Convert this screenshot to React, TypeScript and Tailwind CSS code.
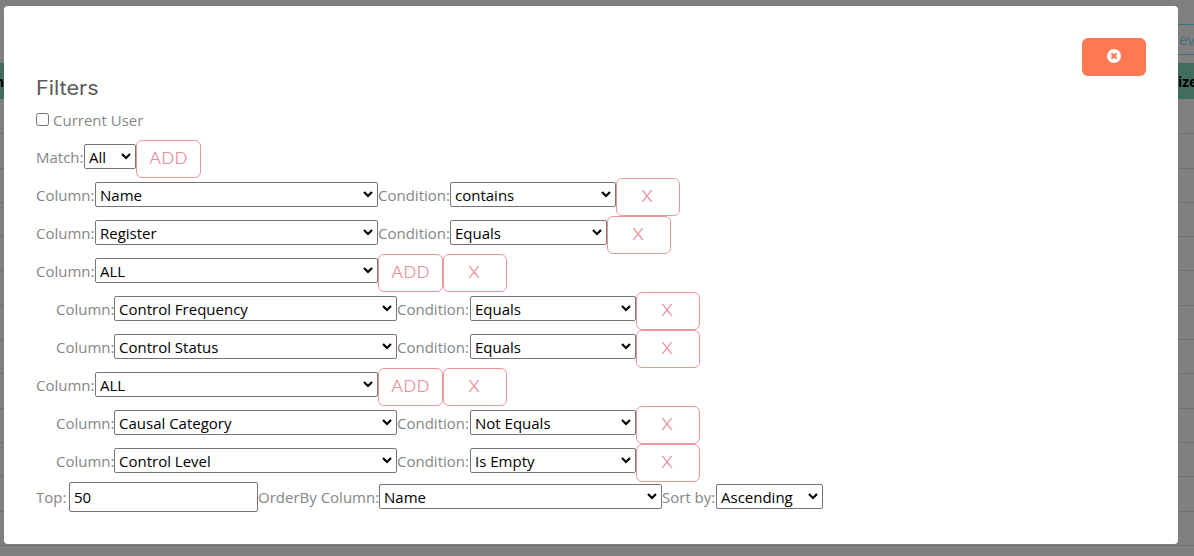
import type { ReactNode } from "react";

const gridLines = [133, 168, 202, 236, 270, 305, 339, 373, 408, 442, 476, 511, 545];

function Label({ children, className }: { children: ReactNode; className: string }) {
  return <span className={`h-[25px] shrink-0 whitespace-nowrap leading-[25px] text-[#868686] ${className}`}>{children}</span>;
}

function Select({ value, className }: { value: string; className: string }) {
  return (
    <div className={`grid h-[25px] shrink-0 ${className}`}>
      <select className="col-start-1 row-start-1 w-full appearance-none rounded-[2px] border border-[#767676] bg-white pl-1 leading-[22px] text-black">
        <option>{value}</option>
      </select>
      <svg className="pointer-events-none col-start-1 row-start-1 mr-[5px] mt-[9px] justify-self-end" width="10" height="7" viewBox="0 0 10 7" fill="none" stroke="#000" strokeWidth="2.2">
        <path d="M1 1l4 4 4-4" />
      </svg>
    </div>
  );
}

function OutlineButton({ children, className = "w-16" }: { children: ReactNode; className?: string }) {
  return (
    <button className={`h-[38px] shrink-0 rounded-[6px] border border-[#e8999f] pb-px pr-px text-center font-['Inter',sans-serif] text-[15.5px] font-light text-[#e8919a] ${className}`}>
      <span className="inline-block scale-x-[1.18]">{children}</span>
    </button>
  );
}

function Condition({ column, condition, indent = false, width = "w-[166px]" }: { column: string; condition: string; indent?: boolean; width?: string }) {
  return (
    <div className={`flex h-[38px] ${indent ? "pl-5" : ""}`}>
      <Label className={`mt-[5px] ${indent ? "w-[58px]" : "w-[59px]"}`}>Column:</Label>
      <Select value={column} className="mt-1 w-[283px]" />
      <Label className={`mt-[5px] ${indent ? "w-[73px]" : "w-[72px]"}`}>Condition:</Label>
      <Select value={condition} className={`mt-1 ${width}`} />
      <OutlineButton>X</OutlineButton>
    </div>
  );
}

function Group() {
  return (
    <div className="flex h-[38px]">
      <Label className="mt-[5px] w-[59px]">Column:</Label>
      <Select value="ALL" className="mt-1 w-[283px]" />
      <OutlineButton className="w-[65px]">ADD</OutlineButton>
      <OutlineButton>X</OutlineButton>
    </div>
  );
}

function Backdrop() {
  return (
    <div className="absolute inset-0 bg-[#808080]">
      {gridLines.map((y) => (
        <div key={y} className="absolute inset-x-0 h-px bg-[#6f6f6f]" style={{ top: y }} />
      ))}
      <div className="absolute right-0 top-6 h-[31px] w-10 border-y border-[#3f6d78] pl-[25px] text-[15px] leading-[29px] text-[#446f7a]">ev</div>
      <div className="absolute inset-x-0 top-[63px] flex h-9 items-center justify-between overflow-hidden bg-[#406d60] text-[14px] font-bold text-black">
        <span className="-ml-[5px]">n</span>
        <span className="w-4">ize</span>
      </div>
    </div>
  );
}

export default function App() {
  return (
    <div className="relative h-[556px] w-[1194px] overflow-hidden font-['Open_Sans',sans-serif] text-[15px]">
      <Backdrop />
      <main className="relative ml-1 mt-1.5 h-[538px] w-[1174px] rounded bg-white px-8 pt-8">
        <div className="flex h-[38px] justify-end">
          <button aria-label="Close" className="flex h-[38px] w-16 items-center justify-center rounded-[6px] bg-[#ff7851] pb-0.5">
            <svg width="16" height="16" viewBox="0 0 16 16">
              <circle cx="8" cy="8" r="7" fill="#fff" />
              <path d="M5.5 5.5l5 5m0-5l-5 5" stroke="#ff7851" strokeWidth="2.3" />
            </svg>
          </button>
        </div>
        <h5 className="h-6 w-fit origin-left scale-x-[1.11] font-['Inter',sans-serif] text-[19.5px] leading-6 text-[#5a5a5a]">Filters</h5>
        <div className="mt-2 flex h-[25px] items-center">
          <input type="checkbox" className="m-0 -mt-0.5 h-[13px] w-[13px]" />
          <Label className="ml-1">Current User</Label>
        </div>
        <div className="mt-[7px] flex h-[38px]">
          <Label className="mt-[5px] w-12">Match:</Label>
          <Select value="All" className="mt-1 w-[52px]" />
          <OutlineButton className="w-[65px]">ADD</OutlineButton>
        </div>
        <Condition column="Name" condition="contains" />
        <Condition column="Register" condition="Equals" width="w-[157px]" />
        <Group />
        <Condition column="Control Frequency" condition="Equals" indent />
        <Condition column="Control Status" condition="Equals" indent />
        <Group />
        <Condition column="Causal Category" condition="Not Equals" indent />
        <Condition column="Control Level" condition="Is Empty" indent />
        <div className="flex h-[30px]">
          <Label className="mt-[3px] w-[33px]">Top:</Label>
          <input defaultValue="50" className="h-[30px] w-[189px] rounded-[2px] border border-[#767676] pl-1 text-black" />
          <Label className="mt-[3px] w-[121px]">OrderBy Column:</Label>
          <Select value="Name" className="mt-0.5 w-[283px]" />
          <Label className="mt-[3px] w-[54px]">Sort by:</Label>
          <Select value="Ascending" className="mt-0.5 w-[107px]" />
        </div>
      </main>
    </div>
  );
}
